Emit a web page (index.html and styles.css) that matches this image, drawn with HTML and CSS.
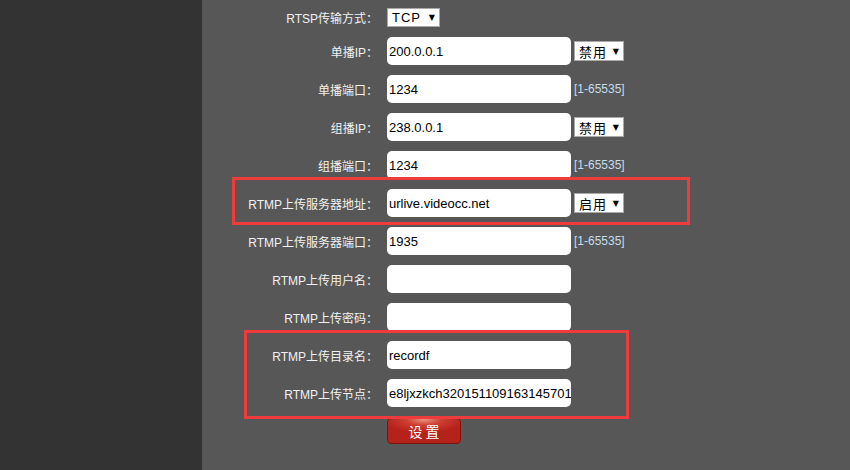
FILE: index.html
```html
<!DOCTYPE html>
<html>
<head>
<meta charset="utf-8">
<link rel="stylesheet" href="styles.css">
</head>
<body>
<div class="sidebar"></div>
<div class="main">
  <div class="form">
    <div class="row row-short">
      <label class="label">RTSP传输方式：</label>
      <span class="select select-tcp"><span class="sel-text">TCP</span><span class="arrow">▼</span></span>
    </div>
    <div class="row">
      <label class="label">单播IP：</label>
      <input class="field" type="text" value="200.0.0.1">
      <span class="select select-cn"><span class="sel-text">禁用</span><span class="arrow">▼</span></span>
    </div>
    <div class="row">
      <label class="label">单播端口：</label>
      <input class="field" type="text" value="1234">
      <span class="range">[1-65535]</span>
    </div>
    <div class="row">
      <label class="label">组播IP：</label>
      <input class="field" type="text" value="238.0.0.1">
      <span class="select select-cn"><span class="sel-text">禁用</span><span class="arrow">▼</span></span>
    </div>
    <div class="row">
      <label class="label">组播端口：</label>
      <input class="field" type="text" value="1234">
      <span class="range">[1-65535]</span>
    </div>
    <div class="row">
      <label class="label">RTMP上传服务器地址：</label>
      <input class="field" type="text" value="urlive.videocc.net">
      <span class="select select-cn"><span class="sel-text">启用</span><span class="arrow">▼</span></span>
    </div>
    <div class="row">
      <label class="label">RTMP上传服务器端口：</label>
      <input class="field" type="text" value="1935">
      <span class="range">[1-65535]</span>
    </div>
    <div class="row">
      <label class="label">RTMP上传用户名：</label>
      <input class="field" type="text" value="">
    </div>
    <div class="row">
      <label class="label">RTMP上传密码：</label>
      <input class="field" type="text" value="">
    </div>
    <div class="row">
      <label class="label">RTMP上传目录名：</label>
      <input class="field" type="text" value="recordf">
    </div>
    <div class="row">
      <label class="label">RTMP上传节点：</label>
      <input class="field" type="text" value="e8ljxzkch320151109163145701">
    </div>
    <div class="row row-btn">
      <span class="label"></span>
      <button class="btn" type="button">设 置</button>
    </div>
  </div>
  <div class="mark mark-1"></div>
  <div class="mark mark-2"></div>
</div>
</body>
</html>
```

FILE: styles.css
```css
html, body {
  margin: 0;
  padding: 0;
  height: 470px;
  overflow: hidden;
}
body {
  display: flex;
  font-family: "Liberation Sans", "Noto Sans CJK SC", sans-serif;
}
.sidebar {
  width: 202px;
  flex: none;
  background: #333333;
}
.main {
  flex: 1;
  position: relative;
  background: #575757;
  padding-top: 8px;
}
.form {
  display: flex;
  flex-direction: column;
  gap: 10px;
}
.row {
  display: flex;
  align-items: center;
  height: 28px;
}
.row-short {
  height: 19px;
}
.row-btn {
  height: 26px;
  margin-top: 1px;
}
.label {
  width: 176px;
  flex: none;
  margin-right: 9px;
  text-align: right;
  color: #f2f2f2;
  font-size: 12px;
  white-space: nowrap;
}
.field {
  box-sizing: border-box;
  width: 184px;
  height: 28px;
  margin: 0 3px 0 0;
  padding: 0 0 0 2px;
  border: none;
  border-radius: 5px;
  background: #ffffff;
  color: #000000;
  font-family: "Liberation Sans", "Noto Sans CJK SC", sans-serif;
  font-size: 13px;
  outline: none;
}
.select {
  box-sizing: border-box;
  display: flex;
  align-items: center;
  height: 20px;
  background: #ffffff;
  border: 1px solid #a9a9a9;
  color: #000000;
  font-size: 13px;
}
.select-tcp {
  width: 53px;
  height: 19px;
  padding-left: 4px;
}
.select-cn {
  width: 50px;
  padding-left: 4px;
}
.sel-text {
  flex: 1;
  letter-spacing: 1px;
}
.arrow {
  font-size: 8px;
  margin-right: 4px;
  font-family: "DejaVu Sans", sans-serif;
}
.range {
  color: #c4dcee;
  font-size: 12px;
}
.btn {
  box-sizing: border-box;
  width: 74px;
  height: 26px;
  padding: 0;
  border: 1px solid #7e1410;
  border-radius: 4px;
  background: radial-gradient(ellipse 40px 14px at 50% 0%, #eb9a88 0%, #cf3f33 45%, #b5221a 100%);
  color: #ffffff;
  font-family: "Noto Sans CJK SC", sans-serif;
  font-size: 14px;
  line-height: 24px;
}
.mark {
  position: absolute;
  box-sizing: border-box;
  border: 3px solid #ee3b3b;
}
.mark-1 {
  left: 30px;
  top: 177px;
  width: 458px;
  height: 48px;
}
.mark-2 {
  left: 42px;
  top: 330px;
  width: 385px;
  height: 89px;
}
```
